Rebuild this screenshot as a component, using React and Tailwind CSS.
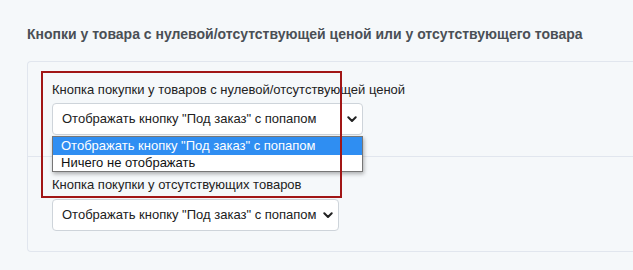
import { useState } from 'react';

function Chevron() {
    return (
        <svg width="10" height="7" viewBox="0 0 10 7" className="shrink-0">
            <path d="M1.3 1.3 L5 5 L8.7 1.3" fill="none" stroke="#222" strokeWidth="2" strokeLinecap="round" strokeLinejoin="round" />
        </svg>
    );
}

function FakeSelect({ value, width }) {
    return (
        <div
            className="h-[32px] flex items-center justify-between pl-[9px] pr-[5px] bg-white border border-[#ced4da] rounded-[4px] text-[13px] text-[#212121]"
            style={{ width }}
        >
            <span className="whitespace-nowrap">{value}</span>
            <Chevron />
        </div>
    );
}

export default function App() {
    const [open] = useState(true);
    const label = 'Отображать кнопку "Под заказ" с попапом';

    return (
        <div className="min-h-screen bg-[#f5f8fa] pt-[26px] pl-[27px] font-['Liberation_Sans',Arial,sans-serif]">
            {/* Section title */}
            <h2 className="text-[14px] leading-[16px] font-bold text-[#4a4f55] whitespace-nowrap">
                Кнопки у товара с нулевой/отсутствующей ценой или у отсутствующего товара
            </h2>

            {/* Settings card */}
            <div className="relative mt-[19px] border border-r-0 border-[#e1e6ee] rounded-l-[4px]">
                <div className="pl-[24px] pt-[20px] pb-[21px]">
                    <div className="text-[13px] leading-[15px] text-[#222] mb-[6px]">Кнопка покупки у товаров с нулевой/отсутствующей ценой</div>
                    <FakeSelect value={label} width={311} />
                </div>
                <div className="border-t border-[#e1e6ee] pl-[24px] pt-[20px] pb-[20px]">
                    <div className="text-[13px] leading-[15px] text-[#222] mb-[7px]">Кнопка покупки у отсутствующих товаров</div>
                    <FakeSelect value={label} width={287} />
                </div>

                {/* Open dropdown list */}
                {open && (
                    <div className="absolute left-[24px] top-[74px] w-[311px] bg-white border border-[#767676] shadow-[1px_2px_4px_rgba(0,0,0,0.3)] text-[13px]">
                        <div className="bg-[#2f8ef2] text-white pl-[8px] h-[18px] leading-[18px]">{label}</div>
                        <div className="text-[#111] pl-[8px] h-[16px] leading-[16px]">Ничего не отображать</div>
                    </div>
                )}

                {/* Highlight frame */}
                <div className="absolute left-[13px] top-[9px] w-[301px] h-[127px] border-2 border-[#a11616] pointer-events-none" />
            </div>
        </div>
    );
}
